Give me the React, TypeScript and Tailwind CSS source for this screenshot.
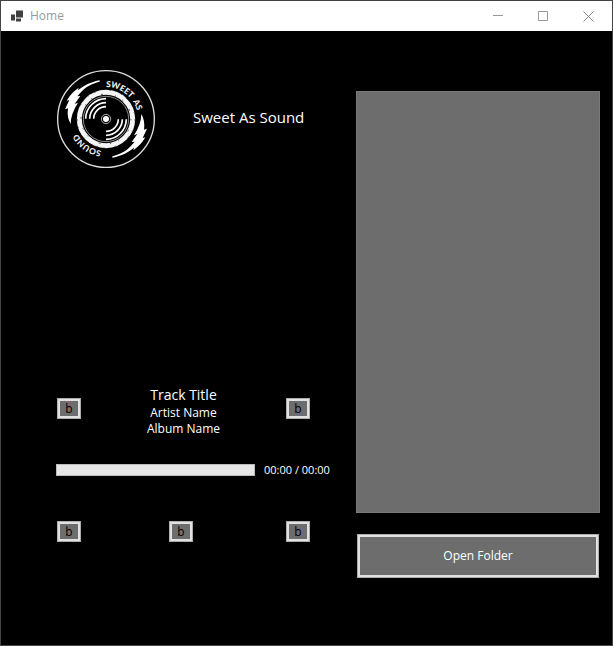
import React from "react";

function Bolt() {
  return (
    <path
      fill="#fff"
      transform="translate(42 36)"
      d="M107 13 C84 17 60 28 42 43 L44 35 Q20 52 8 74 L16 72 L3 100 L12 97 Q8 124 20 144 Q20 114 42 80 L32 84 L49 60 L40 61 L52 47 C64 34 84 22 107 17 Z"
    />
  );
}

function Logo() {
  return (
    <svg viewBox="21 18 294 294" className="size-[98px] shrink-0" role="img" aria-label="Sweet As Sound logo">
      <defs>
        <path id="rim" d="M168 69 A96 96 0 0 1 168 261 A96 96 0 0 1 168 69" />
        <path id="rimLow" d="M168 261 A96 96 0 0 1 72 165 A96 96 0 0 1 168 69" />
      </defs>
      <g fill="none" stroke="#fff">
        <circle cx="168" cy="165" r="145" strokeWidth="4" stroke="#ddd" />
        <circle cx="168" cy="165" r="80" strokeWidth="15" stroke="#f4f4f4" />
        <circle cx="168" cy="165" r="87" strokeWidth="3" stroke="#444" strokeDasharray="5 31 3 17 7 42" />
        <circle cx="168" cy="165" r="75" strokeWidth="3" stroke="#555" strokeDasharray="4 29 6 37 3 22" />
        <circle cx="168" cy="165" r="68" strokeWidth="2" stroke="#ccc" />
        <g strokeWidth="5">
          <path d="M107 164 A61 61 0 0 1 168 104" />
          <path d="M119 164 A49 49 0 0 1 168 116" />
          <path d="M131 164 A37 37 0 0 1 168 128" />
          <path d="M229 166 A61 61 0 0 1 168 226" />
          <path d="M217 166 A49 49 0 0 1 168 214" />
          <path d="M205 166 A37 37 0 0 1 168 202" />
        </g>
        <circle cx="168" cy="165" r="14" strokeWidth="2" />
      </g>
      <circle cx="168" cy="165" r="9" fill="#fff" />
      <Bolt />
      <g transform="rotate(180 168 165)">
        <Bolt />
      </g>
      <g className="font-['Lato',sans-serif] text-[25px] font-black" fill="#eee">
        <text>
          <textPath href="#rim" startOffset="0">SWEET</textPath>
        </text>
        <text>
          <textPath href="#rim" startOffset="94">AS</textPath>
        </text>
        <text>
          <textPath href="#rimLow" startOffset="14">SOUND</textPath>
        </text>
      </g>
    </svg>
  );
}

function SmallButton({ label }: { label: string }) {
  return (
    <button
      type="button"
      aria-label={label}
      className="flex h-[21px] w-6 shrink-0 items-center justify-center border border-[#adadad] bg-[#6d6d6d] text-xs text-black ring-2 ring-inset ring-[#e1e1e1]"
    >
      b
    </button>
  );
}

function TitleBar() {
  const control = "flex h-full w-[45px] items-center justify-center";
  return (
    <header className="flex h-[30px] items-center bg-white pr-px text-[#999]">
      <svg viewBox="0 0 12 11" className="ml-[10px] size-3 shrink-0" fill="#404040" aria-hidden="true">
        <path d="M5 0h7v7H5z M0 4h4v6H0z M5 8h5v3H5z" />
      </svg>
      <h1 className="ml-[7px] flex-1 text-xs">Home</h1>
      <button type="button" aria-label="Minimize" className={control}>
        <svg viewBox="0 0 11 11" className="size-[11px]" stroke="#999" fill="none">
          <path d="M0 4.5h10" />
        </svg>
      </button>
      <button type="button" aria-label="Maximize" className={control}>
        <svg viewBox="0 0 11 11" className="size-[11px]" stroke="#999" fill="none">
          <path d="M.5.5h9v9h-9z" />
        </svg>
      </button>
      <button type="button" aria-label="Close" className={control}>
        <svg viewBox="0 0 11 11" className="size-[11px]" stroke="#888" fill="none">
          <path d="M.5.5l10 10M10.5.5l-10 10" />
        </svg>
      </button>
    </header>
  );
}

export default function App() {
  return (
    <div className="flex min-h-screen flex-col border border-[#444] bg-black font-['Open_Sans','Noto_Sans',sans-serif] text-white">
      <TitleBar />
      <main className="grid flex-1 grid-cols-[minmax(0,1fr)_244px] items-start gap-x-[26px] pr-3 pl-[55px]">
        <section className="pt-[39px]">
          <div className="flex items-center gap-[38px] pl-px">
            <Logo />
            <h2 className="pb-1 text-[15px] leading-5">Sweet As Sound</h2>
          </div>

          <div className="mt-[218px] mr-5 ml-px flex items-start justify-between">
            <div className="pt-3">
              <SmallButton label="Back" />
            </div>
            <div className="text-center">
              <p className="pb-px text-sm leading-[18px]">Track Title</p>
              <p className="text-xs leading-4">Artist Name</p>
              <p className="text-xs leading-4">Album Name</p>
            </div>
            <div className="pt-3">
              <SmallButton label="Forward" />
            </div>
          </div>

          <div className="mt-[26px] flex items-center gap-[9px]">
            <div
              role="progressbar"
              aria-label="Track position"
              aria-valuenow={0}
              className="h-3 flex-1 border border-[#bcbcbc] bg-[#e6e6e6]"
            />
            <span className="w-[66px] text-[11px] leading-[14px] whitespace-nowrap">00:00 / 00:00</span>
          </div>

          <div className="mt-11 mr-5 ml-px grid grid-cols-[112fr_117fr_24px]">
            <SmallButton label="Previous" />
            <SmallButton label="Play" />
            <SmallButton label="Next" />
          </div>
        </section>

        <section className="flex flex-col gap-[21px] pt-[60px]">
          <div role="listbox" aria-label="Tracks" className="h-[422px] border border-[#7a7a7a] bg-[#6d6d6d]" />
          <button
            type="button"
            className="mx-px h-11 border border-[#adadad] bg-[#6d6d6d] text-xs ring-2 ring-inset ring-[#e1e1e1]"
          >
            Open Folder
          </button>
        </section>
      </main>
    </div>
  );
}
